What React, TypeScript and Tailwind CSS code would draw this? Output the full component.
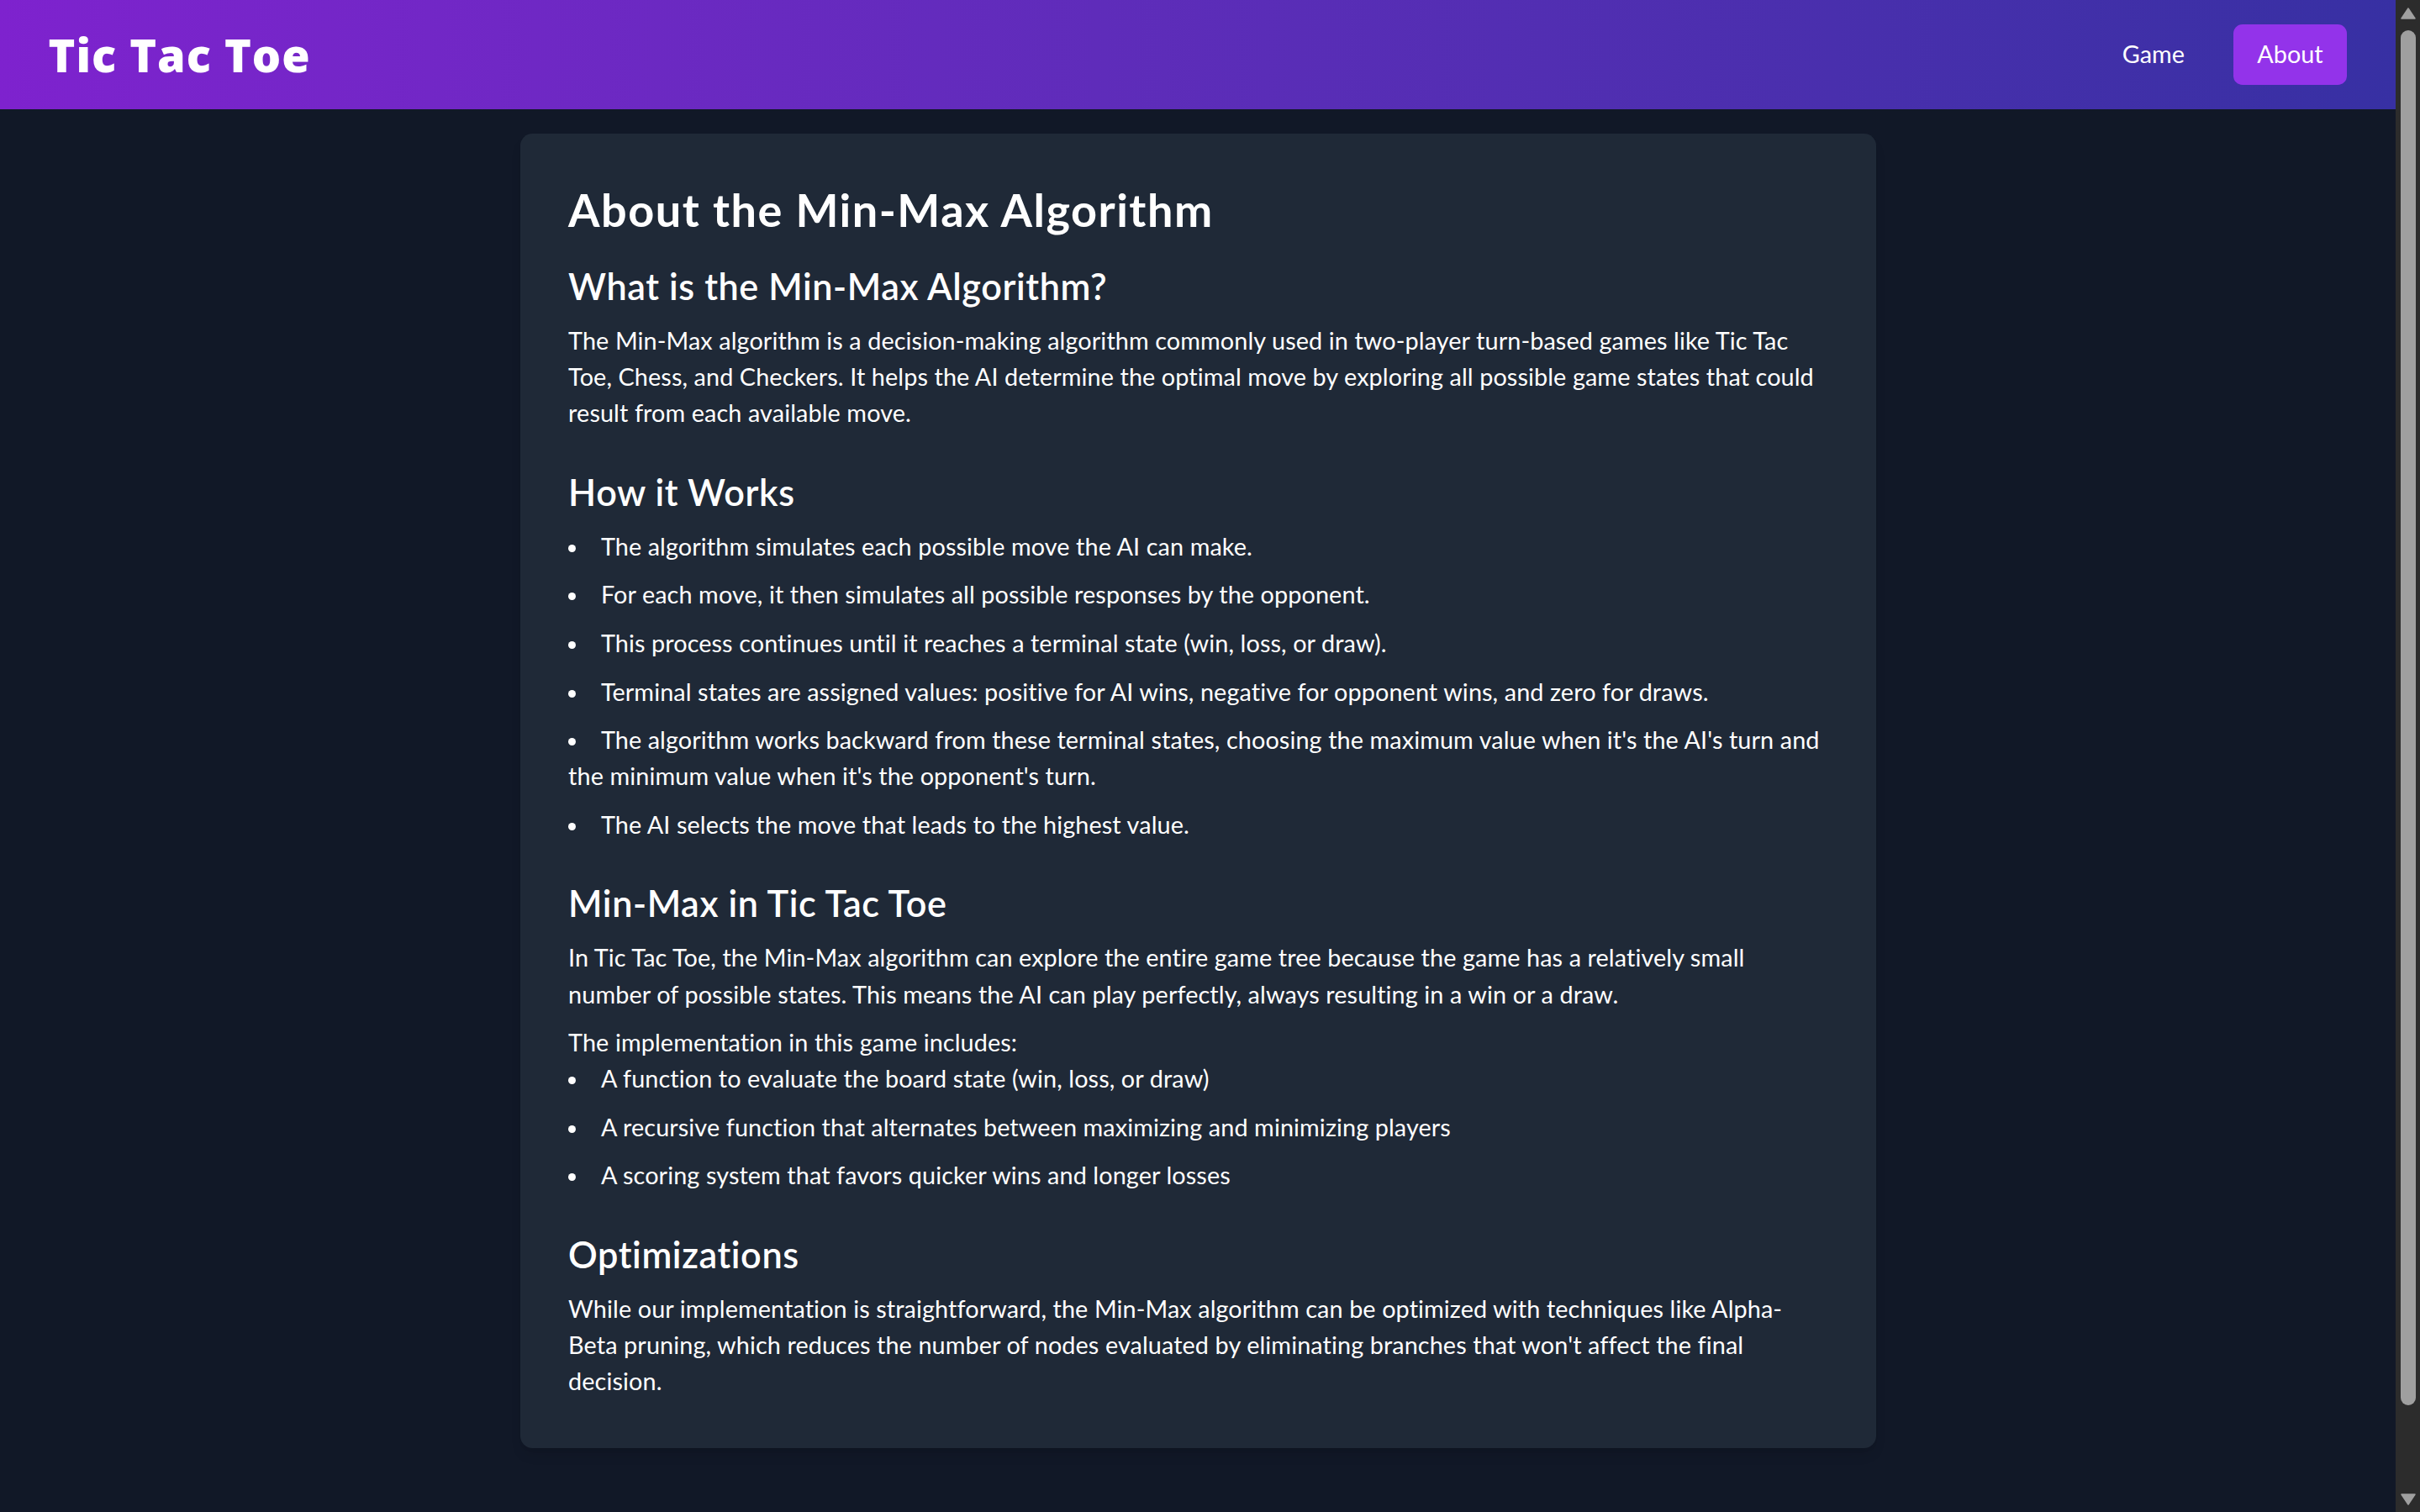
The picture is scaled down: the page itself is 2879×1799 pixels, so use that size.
const howItWorks = [
  'The algorithm simulates each possible move the AI can make.',
  'For each move, it then simulates all possible responses by the opponent.',
  'This process continues until it reaches a terminal state (win, loss, or draw).',
  'Terminal states are assigned values: positive for AI wins, negative for opponent wins, and zero for draws.',
  "The algorithm works backward from these terminal states, choosing the maximum value when it's the AI's turn and the minimum value when it's the opponent's turn.",
  'The AI selects the move that leads to the highest value.',
];

const includes = [
  'A function to evaluate the board state (win, loss, or draw)',
  'A recursive function that alternates between maximizing and minimizing players',
  'A scoring system that favors quicker wins and longer losses',
];

function Scrollbar() {
  return (
    <div className="w-[29px] shrink-0 bg-[#2c2c2c] flex flex-col items-center pt-[9px] pb-[8px]">
      <svg width="18" height="14" viewBox="0 0 18 14" className="shrink-0">
        <path d="M9 1 L17 13 L1 13 Z" fill="#a0a0a0" strokeLinejoin="round" stroke="#a0a0a0" strokeWidth="1.5" />
      </svg>
      <div className="mt-[13px] w-[18px] h-[1636px] rounded-full bg-[#9f9f9f]" />
      <div className="flex-1" />
      <svg width="18" height="14" viewBox="0 0 18 14" className="shrink-0">
        <path d="M1 1 L17 1 L9 13 Z" fill="#a0a0a0" strokeLinejoin="round" stroke="#a0a0a0" strokeWidth="1.5" />
      </svg>
    </div>
  );
}

function Section({ title, children, last }: { title: string; children: React.ReactNode; last?: boolean }) {
  return (
    <section className={last ? '' : 'mb-[43.2px]'}>
      <h2 className="text-[43.2px] leading-[57.6px] font-semibold tracking-[0.6px] mb-[14.4px]">{title}</h2>
      {children}
    </section>
  );
}

function Bullets({ items }: { items: string[] }) {
  return (
    <ul className="list-disc list-inside flex flex-col gap-[14.4px]">
      {items.map((t) => (
        <li key={t}>{t}</li>
      ))}
    </ul>
  );
}

export default function App() {
  return (
    <div className="h-screen overflow-hidden flex bg-[#111827] text-white font-['Lato','Noto_Sans',sans-serif]">
      <div className="flex-1 flex flex-col min-w-0">
        <nav className="h-[130px] shrink-0 flex items-center justify-between px-[57.6px] bg-linear-to-r from-[#7e22ce] to-[#3730a3]">
          <h1 className="font-['Open_Sans',sans-serif] text-[54px] leading-none font-extrabold tracking-[1px]">Tic Tac Toe</h1>
          <div className="flex items-center gap-[28.8px] text-[28.8px] leading-[43.2px]">
            <button className="px-[28.8px] py-[14.4px] rounded-[10.8px]">Game</button>
            <button className="px-[28.8px] py-[14.4px] rounded-[10.8px] bg-[#9333ea]">About</button>
          </div>
        </nav>

        <main className="py-[28.8px]">
          <div className="mx-auto w-[1613px] bg-[#1f2937] rounded-[14.4px] p-[57.6px] shadow-lg text-[28.8px] leading-[43.2px] tracking-[0.1px]">
            <h1 className="text-[54px] leading-[64.8px] font-bold tracking-[1.5px] mb-[28.8px] mt-[2px]">About the Min-Max Algorithm</h1>

            <Section title="What is the Min-Max Algorithm?">
              <p>
                The Min-Max algorithm is a decision-making algorithm commonly used in two-player turn-based games like Tic Tac
                Toe, Chess, and Checkers. It helps the AI determine the optimal move by exploring all possible game states that could
                result from each available move.
              </p>
            </Section>

            <Section title="How it Works">
              <Bullets items={howItWorks} />
            </Section>

            <Section title="Min-Max in Tic Tac Toe">
              <p className="mb-[14.4px]">
                In Tic Tac Toe, the Min-Max algorithm can explore the entire game tree because the game has a relatively small
                number of possible states. This means the AI can play perfectly, always resulting in a win or a draw.
              </p>
              <p>The implementation in this game includes:</p>
              <Bullets items={includes} />
            </Section>

            <Section title="Optimizations" last>
              <p>
                While our implementation is straightforward, the Min-Max algorithm can be optimized with techniques like Alpha-Beta
                pruning, which reduces the number of nodes evaluated by eliminating branches that won't affect the final decision.
              </p>
            </Section>
          </div>
        </main>
      </div>
      <Scrollbar />
    </div>
  );
}
